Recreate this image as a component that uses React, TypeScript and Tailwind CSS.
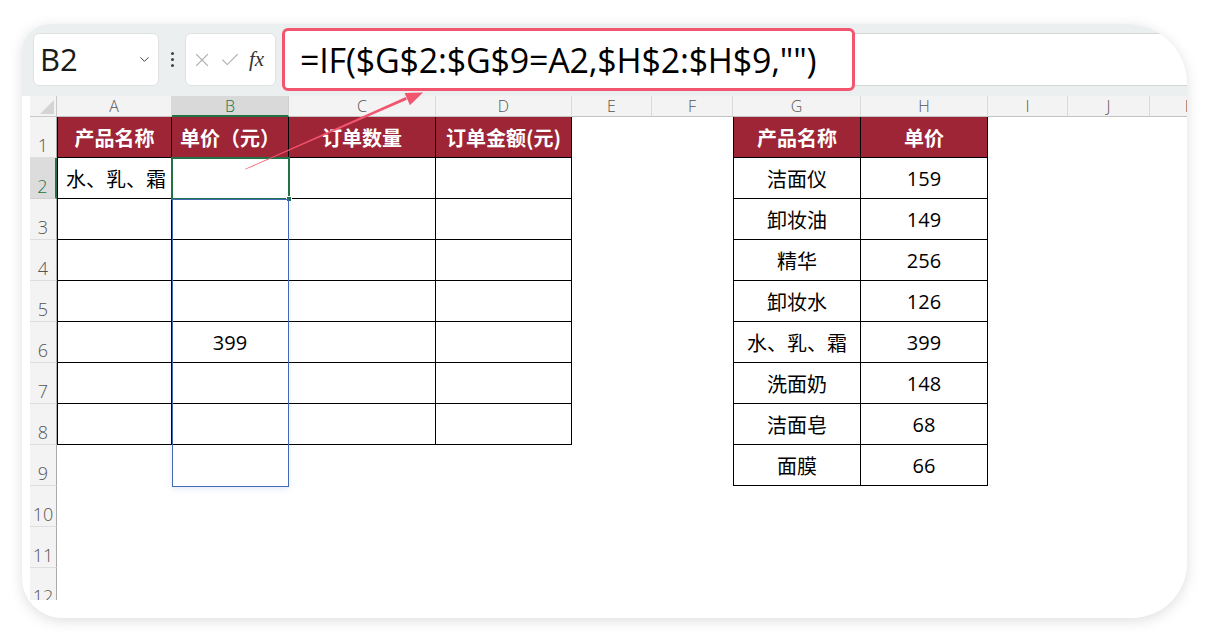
import React from 'react'
import { Check, ChevronDown, X } from 'lucide-react'

const colLetters = ['A', 'B', 'C', 'D', 'E', 'F', 'G', 'H', 'I', 'J', 'K']

// 左表 A1:D8
const leftTable: Record<number, string[]> = {
  1: ['产品名称', '单价（元）', '订单数量', '订单金额(元)'],
  2: ['水、乳、霜', '', '', ''],
  3: ['', '', '', ''],
  4: ['', '', '', ''],
  5: ['', '', '', ''],
  6: ['', '399', '', ''],
  7: ['', '', '', ''],
  8: ['', '', '', ''],
}

// 右表 G1:H9
const rightTable: Record<number, string[]> = {
  1: ['产品名称', '单价'],
  2: ['洁面仪', '159'],
  3: ['卸妆油', '149'],
  4: ['精华', '256'],
  5: ['卸妆水', '126'],
  6: ['水、乳、霜', '399'],
  7: ['洗面奶', '148'],
  8: ['洁面皂', '68'],
  9: ['面膜', '66'],
}

const rows = Array.from({ length: 12 }, (_, i) => i + 1)

function Cell({ row, col }: { row: number; col: number }) {
  let text = ''
  let inTable = false
  let first = false
  if (col <= 3 && leftTable[row]) {
    inTable = true
    first = col === 0
    text = leftTable[row][col]
  } else if ((col === 6 || col === 7) && rightTable[row]) {
    inTable = true
    first = col === 6
    text = rightTable[row][col - 6]
  }
  const header = inTable && row === 1
  const isNum = /^\d+$/.test(text)

  return (
    <div
      className={[
        'flex items-center min-w-0 overflow-hidden whitespace-nowrap pt-[1px]',
        row === 2 && col === 0 ? 'justify-start pl-2' : 'justify-center',
        inTable ? 'border-r border-b border-black' : '',
        inTable && first ? 'border-l' : '',
        header ? 'bg-[#9d2536] text-white font-bold' : 'text-black',
        isNum ? "font-['Open_Sans'] text-[20px]" : 'text-[20px]',
      ].join(' ')}
    >
      {text}
    </div>
  )
}

export default function App() {
  return (
    <div className="relative w-[1209px] h-[641px] bg-white overflow-hidden font-['Noto_Sans_CJK_SC',sans-serif]">
      <div className="ml-[22px] mt-[24px] w-[1165px] h-[594px] bg-white rounded-tl-[28px] rounded-tr-[60px] rounded-br-[55px] rounded-bl-[40px] shadow-[0_3px_14px_rgba(0,0,0,0.13)] overflow-hidden relative flex flex-col">
        {/* toolbar */}
        <div className="bg-[#eceff0] pt-[9px] pb-[10px] pl-[11px] flex items-stretch h-[72px]">
          <div className="w-[126px] h-[53px] bg-white rounded-[6px] border border-[#dfe1e3] flex items-center pl-[6px] pr-[6px]">
            <span className="font-['Open_Sans'] text-[31px] text-[#1a1a1a] leading-none">B2</span>
            <ChevronDown className="ml-auto text-[#444]" size={15} strokeWidth={1.6} />
          </div>
          <div className="w-[26px] flex flex-col items-center justify-center gap-[3px]">
            <span className="w-[3px] h-[3px] rounded-full bg-[#444]" />
            <span className="w-[3px] h-[3px] rounded-full bg-[#444]" />
            <span className="w-[3px] h-[3px] rounded-full bg-[#444]" />
          </div>
          <div className="w-[91px] h-[53px] bg-white rounded-[6px] border border-[#dfe1e3] flex items-center pl-[5px] gap-[6px]">
            <X className="text-[#b3b3b3]" size={22} strokeWidth={1.2} />
            <Check className="text-[#b3b3b3]" size={22} strokeWidth={1.2} />
            <span className="font-['Liberation_Serif',serif] italic text-[21px] text-[#333] leading-none ml-[2px]">fx</span>
          </div>
          <div className="ml-[6px] flex-1 h-[53px] bg-white border-y border-[#d3d5d7]" />
        </div>

        {/* formula annotation box */}
        <div className="absolute left-[260px] top-[4px] w-[573px] h-[63px] border-[3px] border-[#f2566f] rounded-[6px] bg-white flex items-center pl-[15px]">
          <span className="font-['Open_Sans'] text-[34px] text-black leading-none tracking-[-0.2px]">
            =IF($G$2:$G$9=A2,$H$2:$H$9,"")
          </span>
        </div>

        {/* grid */}
        <div className="relative ml-[8px] h-[504px] overflow-hidden">
          <div className="grid grid-cols-[27px_115px_117px_147px_136px_80px_81px_128px_127px_80px_82px_80px] grid-rows-[21px_repeat(12,41px)] w-[1200px]">
            <div className="bg-[#f3f3f3] border-r border-b border-[#c8c8c8] flex items-end justify-end p-[2px]">
              <svg width="14" height="14" viewBox="0 0 14 14">
                <polygon points="14,0 14,14 0,14" fill="#d4d4d4" />
              </svg>
            </div>
            {colLetters.map((l) => (
              <div
                key={l}
                className={
                  l === 'B'
                    ? "bg-[#d9d9d9] border-r border-[#d0d0d0] border-b-2 border-b-[#217346] flex items-center justify-center text-[16px] leading-none text-[#217346] font-['Open_Sans'] font-light"
                    : "bg-[#f3f3f3] border-r border-[#dadada] border-b border-b-[#c3c3c3] flex items-center justify-center text-[16px] leading-none text-[#555] font-['Open_Sans'] font-light"
                }
              >
                {l}
              </div>
            ))}

            {rows.map((r) => (
              <React.Fragment key={r}>
                <div
                  className={
                    r === 2
                      ? "bg-[#dcdcdc] border-b border-[#d0d0d0] border-r-2 border-r-[#217346] flex items-end justify-center pb-[3px] text-[18px] leading-none text-[#217346] font-['Open_Sans'] font-light"
                      : "bg-[#f3f3f3] border-b border-[#dedede] border-r border-r-[#a9a9a9] flex items-end justify-center pb-[3px] text-[18px] leading-none text-[#555] font-['Open_Sans'] font-light"
                  }
                >
                  {r}
                </div>
                {colLetters.map((_, c) => (
                  <Cell key={c} row={r} col={c} />
                ))}
              </React.Fragment>
            ))}
          </div>

          {/* selection: B2 */}
          <div className="absolute left-[141px] top-[61px] w-[119px] h-[43px] border-2 border-[#217346] pointer-events-none">
            <span className="absolute -right-[4px] -bottom-[4px] w-[6px] h-[6px] bg-[#217346] border border-white" />
          </div>
          {/* referenced range B3:B9 */}
          <div className="absolute left-[142px] top-[103px] w-[117px] h-[288px] border border-[#4169b8] shadow-[0_2px_6px_rgba(65,105,184,0.15)] pointer-events-none" />
        </div>
      </div>

      {/* arrow */}
      <svg className="absolute left-0 top-0 pointer-events-none" width="1209" height="641">
        <polygon points="245,169 245.3,169.6 406.9,99.7 405.7,96.9" fill="#f2566f" />
        <polygon points="423,92.5 409.9,105.2 404.6,93.1" fill="#f2566f" />
      </svg>
    </div>
  )
}
